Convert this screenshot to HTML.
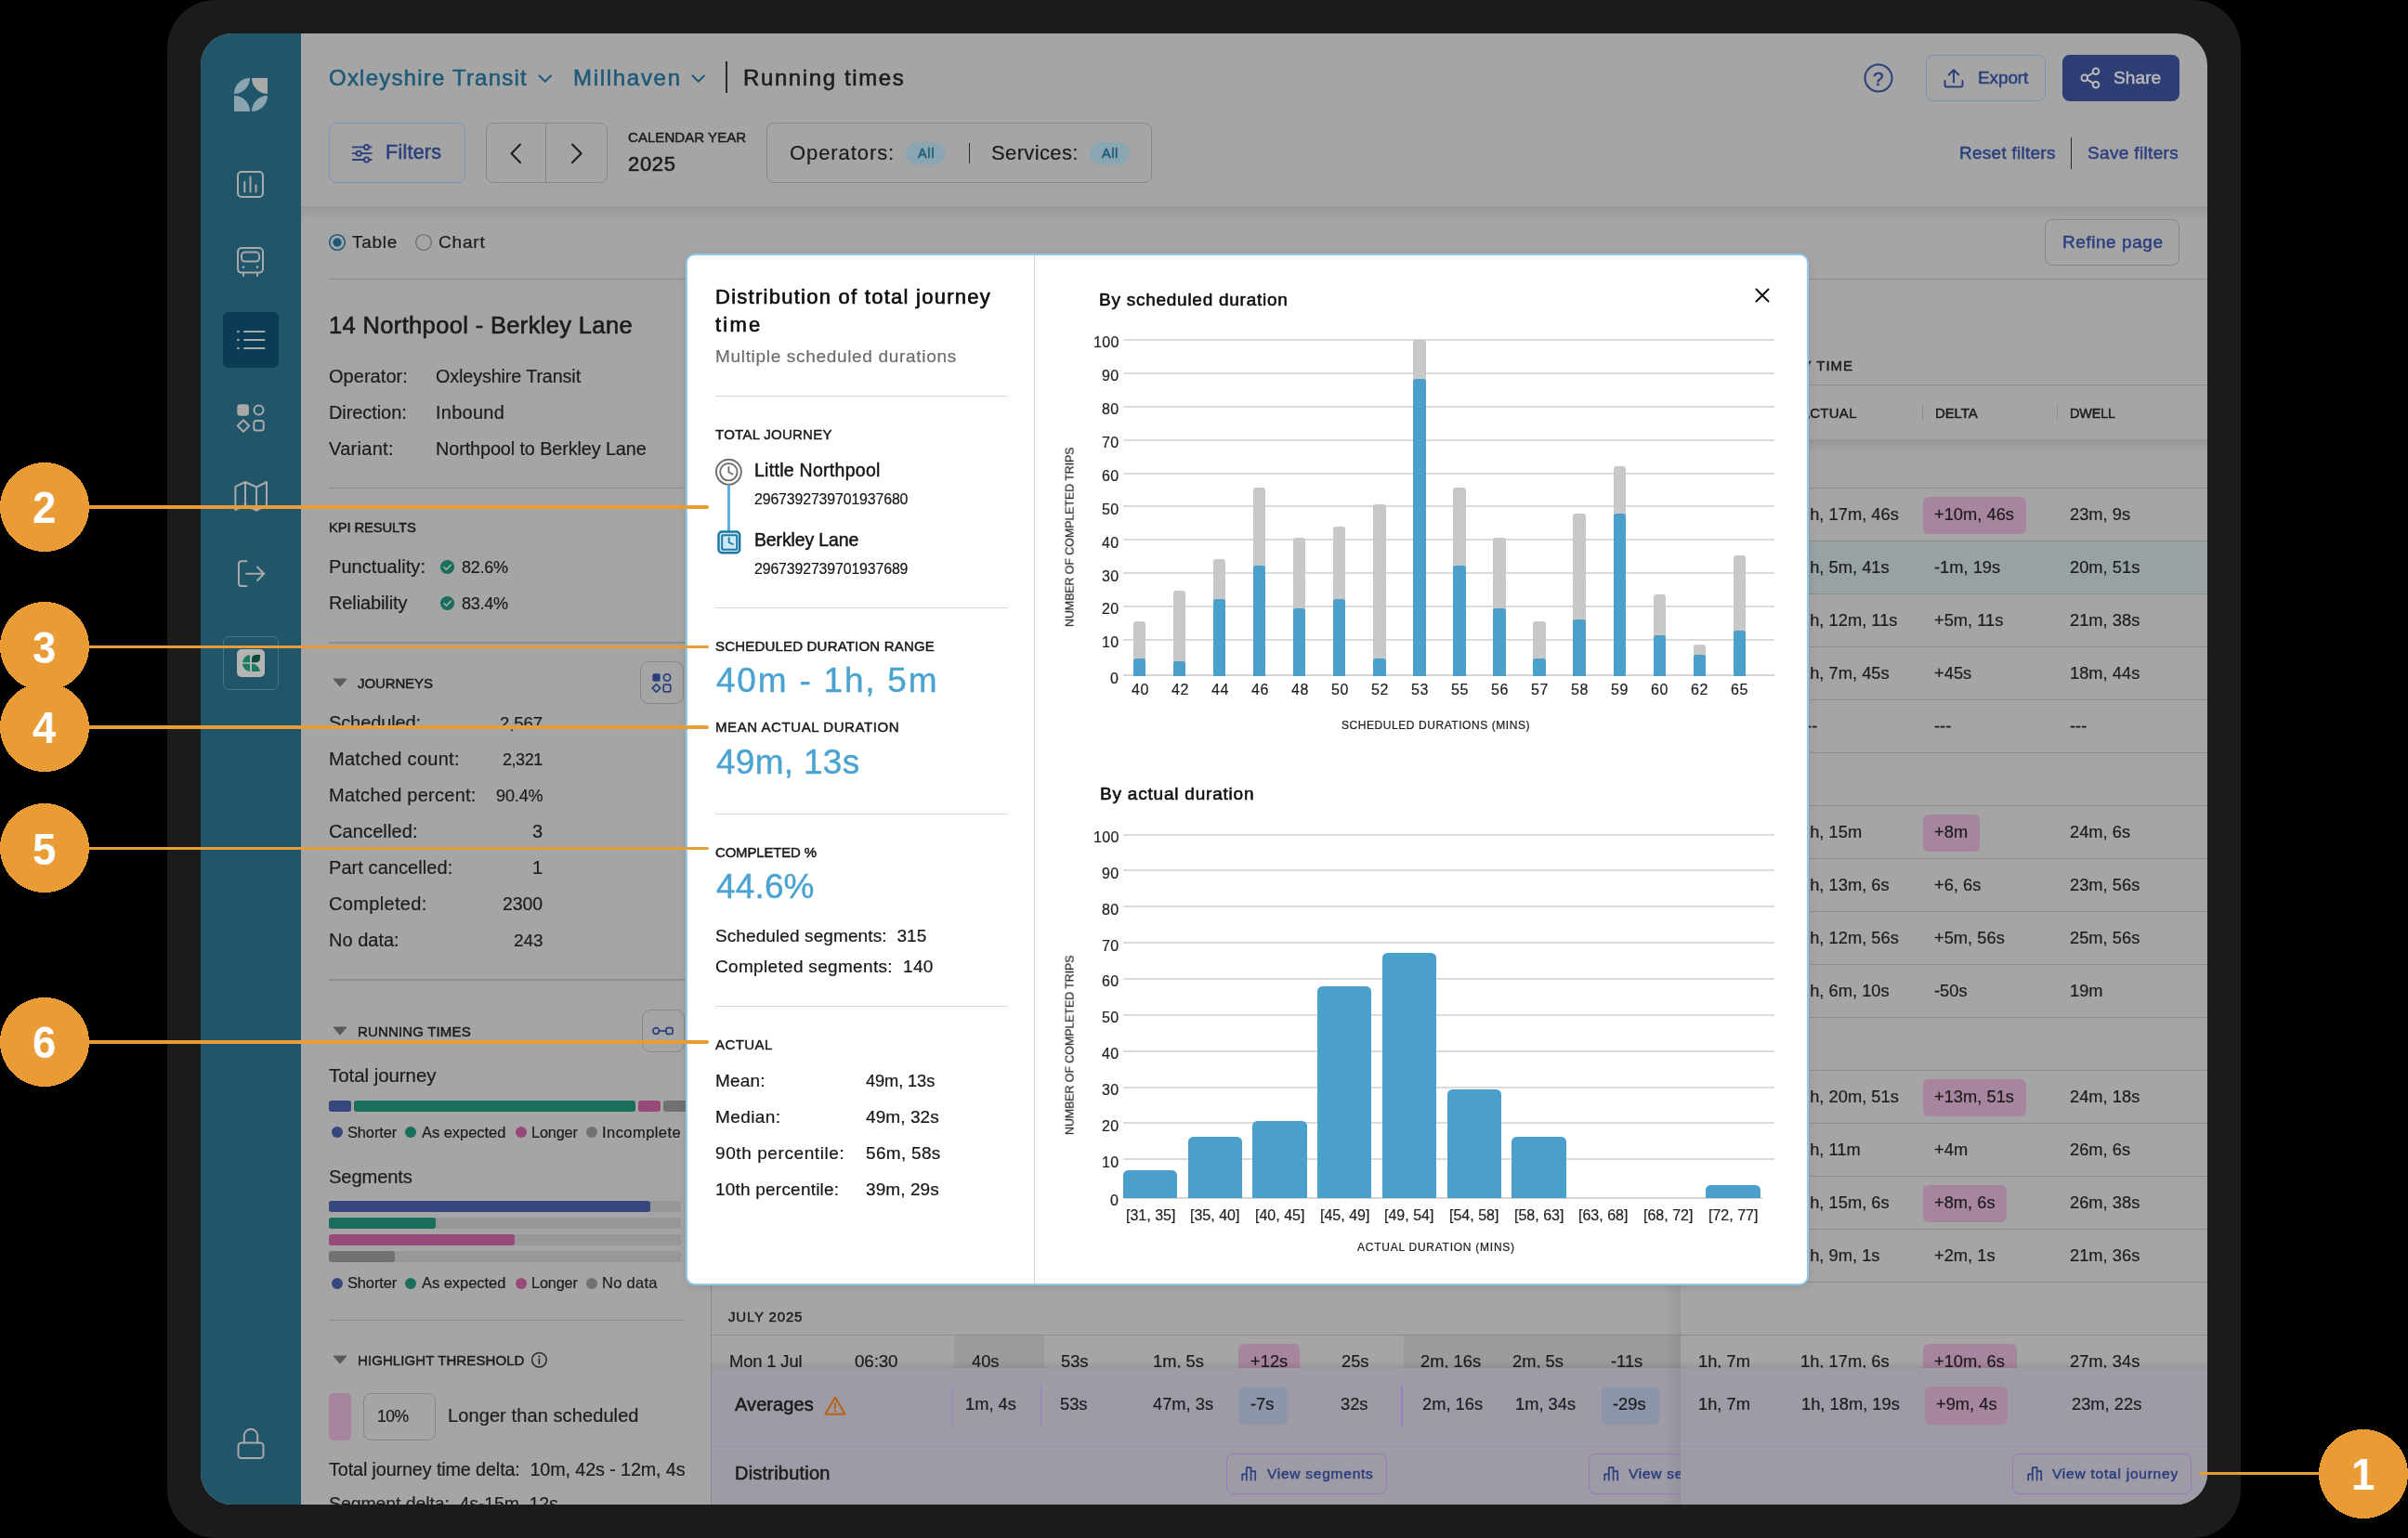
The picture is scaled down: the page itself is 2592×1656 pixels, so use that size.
<!DOCTYPE html>
<html lang="en"><head><meta charset="utf-8"><title>Running times - Distribution of total journey time</title>
<style>
html,body{margin:0;padding:0;background:#000;}
html{width:2592px;height:1656px;overflow:hidden;}
body{width:2592px;height:1656px;position:relative;overflow:hidden;font-family:"Liberation Sans",sans-serif;}
.a{position:absolute;display:block;}
.t{position:absolute;white-space:pre;line-height:1;font-family:"Liberation Sans",sans-serif;}
#frame{position:absolute;left:180px;top:0px;width:2232px;height:1656px;border-radius:52px;background:#1b1b1b;}
#screen{position:absolute;left:216px;top:36px;width:2160px;height:1584px;border-radius:34px;overflow:hidden;background:#a5a5a5;}
#in{position:absolute;left:-216px;top:-36px;width:2592px;height:1656px;}
.t{will-change:transform;}
</style></head><body>
<div id="frame"></div>
<div id="screen"><div id="in">
<div class="a" style="left:216.0px;top:36.0px;width:108.0px;height:1584.0px;background:#21556a;"></div>
<svg class="a" style="left:252.0px;top:84.0px;" width="36" height="36" viewBox="0 0 36 36" fill="none"><path d="M17 0A17 17 0 0 0 0 17A17 17 0 0 0 17 0Z" fill="#8ba5b0"/><path d="M19 0H36V17A17 17 0 0 1 19 0Z" fill="#a9a9a9"/><path d="M0 19V36H17A17 17 0 0 0 0 19Z" fill="#8ba5b0"/><path d="M19 36A17 17 0 0 1 36 19A17 17 0 0 1 19 36Z" fill="#8ba5b0"/></svg>
<svg class="a" style="left:253.7px;top:182.5px;" width="31" height="31" viewBox="0 0 31 31" fill="none"><rect x="2" y="2" width="27" height="27" rx="4" stroke="#a9a9a9" stroke-width="2" stroke-linecap="round" stroke-linejoin="round"/><path d="M9.3 23.5V13.1M15.5 23.5V7.5M21.5 23.5V16.2" stroke="#a9a9a9" stroke-width="2" stroke-linecap="round" stroke-linejoin="round"/></svg>
<svg class="a" style="left:253.7px;top:265.4px;" width="31" height="35" viewBox="0 0 31 35" fill="none"><rect x="2" y="2" width="27" height="26.6" rx="4" stroke="#a9a9a9" stroke-width="2" stroke-linecap="round" stroke-linejoin="round"/><rect x="6" y="6.6" width="19" height="10" rx="3.5" stroke="#a9a9a9" stroke-width="2" stroke-linecap="round" stroke-linejoin="round"/><path d="M8 29v3M23 29v3" stroke="#a9a9a9" stroke-width="2" stroke-linecap="round" stroke-linejoin="round"/><circle cx="8" cy="22.6" r="1.3" fill="#a9a9a9"/><circle cx="23" cy="22.6" r="1.3" fill="#a9a9a9"/></svg>
<div class="a" style="left:240.0px;top:336.0px;width:60.0px;height:60.0px;background:#0b3c56;border-radius:6px;"></div>
<svg class="a" style="left:250.0px;top:350.0px;" width="40" height="32" viewBox="0 0 40 32" fill="none"><path d="M13 7H34.5M13 16H34.5M13 25H34.5" stroke="#a9a9a9" stroke-width="2" stroke-linecap="round" stroke-linejoin="round"/><circle cx="6.4" cy="7" r="1.3" fill="#a9a9a9"/><circle cx="6.4" cy="16" r="1.3" fill="#a9a9a9"/><circle cx="6.4" cy="25" r="1.3" fill="#a9a9a9"/></svg>
<svg class="a" style="left:254.0px;top:434.0px;" width="32" height="32" viewBox="0 0 32 32" fill="none"><rect x="1.3" y="1.3" width="12.6" height="12.4" rx="3.2" fill="#a9a9a9"/><circle cx="24.5" cy="7.5" r="5" stroke="#a9a9a9" stroke-width="2" stroke-linecap="round" stroke-linejoin="round"/><path d="M8 18.2L14.2 24.5L8 30.8L1.8 24.5Z" stroke="#a9a9a9" stroke-width="2" stroke-linecap="round" stroke-linejoin="round"/><rect x="19.3" y="19" width="10.4" height="10.4" rx="2.5" stroke="#a9a9a9" stroke-width="2" stroke-linecap="round" stroke-linejoin="round"/></svg>
<svg class="a" style="left:250.0px;top:515.0px;" width="40" height="38" viewBox="0 0 40 38" fill="none"><path d="M3.4 9L14 4L26 9.5L37 4V29L26 34.5L14 29L3.4 34Z M14 4V29 M26 9.5V34.5" stroke="#a9a9a9" stroke-width="2" stroke-linecap="round" stroke-linejoin="round"/></svg>
<svg class="a" style="left:254.0px;top:601.0px;" width="34" height="34" viewBox="0 0 34 34" fill="none"><path d="M11.5 3.3H6a3 3 0 0 0-3 3V27a3 3 0 0 0 3 3H11.5" stroke="#a9a9a9" stroke-width="2" stroke-linecap="round" stroke-linejoin="round"/><path d="M11 16.7H30M23 9.5L30.2 16.7L23 24" stroke="#a9a9a9" stroke-width="2" stroke-linecap="round" stroke-linejoin="round"/></svg>
<div class="a" style="left:240.3px;top:684.7px;width:59.4px;height:58.4px;border:1.5px solid #43778d;box-sizing:border-box;border-radius:7px;"></div>
<div class="a" style="left:255.0px;top:699.0px;width:30.0px;height:30.0px;background:#b4b4b4;border-radius:5px;"></div>
<svg class="a" style="left:255.0px;top:699.0px;" width="30" height="30" viewBox="0 0 30 30" fill="none"><path d="M14 6A9 9 0 0 0 6 14.2H14Z" fill="#1b7a63"/><path d="M6 15.8A9 9 0 0 0 14 24V15.8Z" fill="#1b7a63"/><path d="M16 15.8V24H25A9 9 0 0 0 16 15.8Z" fill="#1b7a63"/><path d="M16 14.2V10.5A4.5 4.5 0 0 1 20.5 6H25V9.7A4.5 4.5 0 0 1 20.5 14.2Z" fill="#0f4a3c"/></svg>
<svg class="a" style="left:253.0px;top:1536.0px;" width="34" height="37" viewBox="0 0 34 37" fill="none"><rect x="3.5" y="17.5" width="27" height="16.5" rx="3.5" stroke="#a9a9a9" stroke-width="2" stroke-linecap="round" stroke-linejoin="round"/><path d="M9.8 17.5V10a7.2 7.2 0 0 1 14.4 0V17.5" stroke="#a9a9a9" stroke-width="2" stroke-linecap="round" stroke-linejoin="round"/></svg>
<div class="a" style="left:324.0px;top:222.0px;width:2052.0px;height:16.0px;background:linear-gradient(to bottom,rgba(0,0,0,0.075),rgba(0,0,0,0));"></div>
<div class="t" style="left:354.3px;top:72.0px;font-size:24px;color:#1d5a78;letter-spacing:1.21px;-webkit-text-stroke:0.56px #1d5a78;">Oxleyshire Transit</div>
<svg class="a" style="left:578.0px;top:78.0px;" width="18" height="13" viewBox="0 0 18 13" fill="none"><path d="M2.5 3.5L8.8 9.8L15 3.5" stroke="#1d5a78" stroke-width="2" stroke-linecap="round" stroke-linejoin="round"/></svg>
<div class="t" style="left:617.0px;top:72.0px;font-size:24px;color:#1d5a78;letter-spacing:1.70px;-webkit-text-stroke:0.56px #1d5a78;">Millhaven</div>
<svg class="a" style="left:743.0px;top:78.0px;" width="18" height="13" viewBox="0 0 18 13" fill="none"><path d="M2.5 3.5L8.8 9.8L15 3.5" stroke="#1d5a78" stroke-width="2" stroke-linecap="round" stroke-linejoin="round"/></svg>
<div class="a" style="left:781.4px;top:66.4px;width:1.6px;height:33.6px;background:#2a2a2a;"></div>
<div class="t" style="left:800.0px;top:72.0px;font-size:24px;color:#1c1c1c;letter-spacing:1.61px;-webkit-text-stroke:0.56px #1c1c1c;">Running times</div>
<svg class="a" style="left:2005.0px;top:67.0px;" width="34" height="34" viewBox="0 0 34 34" fill="none"><circle cx="17" cy="17" r="14.5" stroke="#2b3f7e" stroke-width="2"/></svg>
<div class="t" style="left:2016.2px;top:74.0px;font-size:21px;color:#2b3f7e;-webkit-text-stroke:0.48px #2b3f7e;">?</div>
<div class="a" style="left:2073.0px;top:58.7px;width:129.0px;height:50.5px;border:1.5px solid #7d90bd;box-sizing:border-box;border-radius:8px;"></div>
<svg class="a" style="left:2090.0px;top:72.0px;" width="26" height="24" viewBox="0 0 26 24" fill="none"><path d="M3.5 15V19.5a2 2 0 0 0 2 2H20.5a2 2 0 0 0 2-2V15" stroke="#2b3f7e" stroke-width="2" stroke-linecap="round" stroke-linejoin="round"/><path d="M13 16.5V3.5M7.7 8.5L13 3.2L18.3 8.5" stroke="#2b3f7e" stroke-width="2" stroke-linecap="round" stroke-linejoin="round"/></svg>
<div class="t" style="left:2128.6px;top:74.0px;font-size:19.03px;color:#2b3f7e;letter-spacing:-0.12px;-webkit-text-stroke:0.48px #2b3f7e;">Export</div>
<div class="a" style="left:2220.1px;top:58.7px;width:125.8px;height:50.5px;background:#2c3e74;border-radius:8px;"></div>
<svg class="a" style="left:2238.0px;top:70.0px;" width="26" height="28" viewBox="0 0 26 28" fill="none"><circle cx="18" cy="6.8" r="3.3" stroke="#b9b9b9" stroke-width="2" stroke-linecap="round"/><circle cx="5.8" cy="13.9" r="3.3" stroke="#b9b9b9" stroke-width="2" stroke-linecap="round"/><circle cx="18" cy="21.3" r="3.3" stroke="#b9b9b9" stroke-width="2" stroke-linecap="round"/><path d="M8.7 12.2L15.1 8.5M8.7 15.6L15.1 19.6" stroke="#b9b9b9" stroke-width="2" stroke-linecap="round"/></svg>
<div class="t" style="left:2275.4px;top:74.0px;font-size:19.2px;color:#b9b9b9;letter-spacing:0.02px;-webkit-text-stroke:0.48px #b9b9b9;">Share</div>
<div class="a" style="left:354.3px;top:132.2px;width:146.3px;height:65.3px;border:1.5px solid #7f93c0;box-sizing:border-box;border-radius:8px;"></div>
<svg class="a" style="left:378.0px;top:153.0px;" width="24" height="24" viewBox="0 0 24 24" fill="none"><path d="M1.7 5.4H13.8M19.2 5.4H21.8M1.7 12.2H5.5M10.8 12.2H21.8M1.7 19H13.8M19.2 19H21.8" stroke="#2b3f7e" stroke-width="1.8" stroke-linecap="round"/><circle cx="16.5" cy="5.4" r="2.6" stroke="#2b3f7e" stroke-width="1.8" stroke-linecap="round"/><circle cx="8.2" cy="12.2" r="2.6" stroke="#2b3f7e" stroke-width="1.8" stroke-linecap="round"/><circle cx="16.5" cy="19" r="2.6" stroke="#2b3f7e" stroke-width="1.8" stroke-linecap="round"/></svg>
<div class="t" style="left:415.4px;top:154.0px;font-size:21.5px;color:#2b3f7e;letter-spacing:0.25px;-webkit-text-stroke:0.56px #2b3f7e;">Filters</div>
<div class="a" style="left:522.6px;top:132.2px;width:131.0px;height:65.3px;border:1.5px solid #878787;box-sizing:border-box;border-radius:8px;"></div>
<div class="a" style="left:586.9px;top:133.0px;width:1.5px;height:64.0px;background:#878787;"></div>
<svg class="a" style="left:545.0px;top:152.0px;" width="20" height="27" viewBox="0 0 20 27" fill="none"><path d="M15 3.5L5.5 13.2L15 23" stroke="#1c1c1c" stroke-width="2" stroke-linecap="round" stroke-linejoin="round"/></svg>
<svg class="a" style="left:611.0px;top:152.0px;" width="20" height="27" viewBox="0 0 20 27" fill="none"><path d="M5 3.5L14.7 13.2L5 23" stroke="#1c1c1c" stroke-width="2" stroke-linecap="round" stroke-linejoin="round"/></svg>
<div class="t" style="left:675.5px;top:140.0px;font-size:15px;color:#1c1c1c;letter-spacing:0.06px;-webkit-text-stroke:0.48px #1c1c1c;">CALENDAR YEAR</div>
<div class="t" style="left:675.5px;top:166.0px;font-size:22px;color:#1c1c1c;letter-spacing:0.69px;-webkit-text-stroke:0.56px #1c1c1c;">2025</div>
<div class="a" style="left:825.2px;top:132.2px;width:414.8px;height:65.3px;border:1.5px solid #878787;box-sizing:border-box;border-radius:8px;"></div>
<div class="t" style="left:849.8px;top:154.0px;font-size:22px;color:#1c1c1c;letter-spacing:0.92px;-webkit-text-stroke:0.2px #1c1c1c;">Operators:</div>
<div class="a" style="left:974.8px;top:153.0px;width:43.4px;height:23.8px;background:#8ba6b3;border-radius:12px;"></div>
<div class="t" style="left:988.2px;top:158.0px;font-size:14.5px;color:#1d5a78;letter-spacing:0.69px;-webkit-text-stroke:0.48px #1d5a78;">All</div>
<div class="a" style="left:1042.5px;top:154.0px;width:1.5px;height:21.7px;background:#2a2a2a;"></div>
<div class="t" style="left:1067.3px;top:154.0px;font-size:22px;color:#1c1c1c;letter-spacing:0.37px;-webkit-text-stroke:0.2px #1c1c1c;">Services:</div>
<div class="a" style="left:1173.0px;top:153.0px;width:43.4px;height:23.8px;background:#8ba6b3;border-radius:12px;"></div>
<div class="t" style="left:1186.4px;top:158.0px;font-size:14.5px;color:#1d5a78;letter-spacing:0.54px;-webkit-text-stroke:0.48px #1d5a78;">All</div>
<div class="t" style="left:2108.6px;top:155.0px;font-size:19px;color:#2b3f7e;letter-spacing:0.26px;-webkit-text-stroke:0.48px #2b3f7e;">Reset filters</div>
<div class="a" style="left:2228.8px;top:148.0px;width:1.5px;height:33.5px;background:#2a2a2a;"></div>
<div class="t" style="left:2247.0px;top:155.0px;font-size:19px;color:#2b3f7e;letter-spacing:0.34px;-webkit-text-stroke:0.48px #2b3f7e;">Save filters</div>
<svg class="a" style="left:352.0px;top:250.0px;" width="22" height="22" viewBox="0 0 22 22" fill="none"><circle cx="11" cy="11" r="8.3" stroke="#1d5a78" stroke-width="1.6"/><circle cx="11" cy="11" r="4.7" fill="#1d5a78"/></svg>
<div class="t" style="left:378.7px;top:251.0px;font-size:19px;color:#1c1c1c;letter-spacing:0.74px;-webkit-text-stroke:0.2px #1c1c1c;">Table</div>
<svg class="a" style="left:445.0px;top:250.0px;" width="22" height="22" viewBox="0 0 22 22" fill="none"><circle cx="11" cy="11" r="8.4" stroke="#707070" stroke-width="1.4"/></svg>
<div class="t" style="left:471.8px;top:251.0px;font-size:19px;color:#1c1c1c;letter-spacing:0.81px;-webkit-text-stroke:0.2px #1c1c1c;">Chart</div>
<div class="a" style="left:2201.0px;top:236.0px;width:145.0px;height:49.6px;border:1.5px solid #878787;box-sizing:border-box;border-radius:8px;"></div>
<div class="t" style="left:2219.5px;top:251.0px;font-size:19px;color:#2b3f7e;letter-spacing:0.55px;-webkit-text-stroke:0.48px #2b3f7e;">Refine page</div>
<div class="a" style="left:354.0px;top:299.7px;width:2022.0px;height:1.6px;background:#8a8a8a;"></div>
<div class="t" style="left:354.0px;top:338.0px;font-size:25.5px;color:#1c1c1c;letter-spacing:0.35px;-webkit-text-stroke:0.64px #1c1c1c;">14 Northpool - Berkley Lane</div>
<div class="t" style="left:354.0px;top:395.0px;font-size:20px;color:#1c1c1c;letter-spacing:0.04px;-webkit-text-stroke:0.2px #1c1c1c;">Operator:</div>
<div class="t" style="left:468.7px;top:396.0px;font-size:19.78px;color:#1c1c1c;letter-spacing:-0.12px;-webkit-text-stroke:0.2px #1c1c1c;">Oxleyshire Transit</div>
<div class="t" style="left:354.0px;top:434.0px;font-size:20px;color:#1c1c1c;letter-spacing:-0.08px;-webkit-text-stroke:0.2px #1c1c1c;">Direction:</div>
<div class="t" style="left:468.7px;top:434.0px;font-size:20px;color:#1c1c1c;letter-spacing:0.25px;-webkit-text-stroke:0.2px #1c1c1c;">Inbound</div>
<div class="t" style="left:354.0px;top:473.0px;font-size:20px;color:#1c1c1c;letter-spacing:0.29px;-webkit-text-stroke:0.2px #1c1c1c;">Variant:</div>
<div class="t" style="left:468.7px;top:474.0px;font-size:19.86px;color:#1c1c1c;letter-spacing:-0.12px;-webkit-text-stroke:0.2px #1c1c1c;">Northpool to Berkley Lane</div>
<div class="a" style="left:354.0px;top:524.8px;width:382.6px;height:1.5px;background:#8d8d8d;"></div>
<div class="t" style="left:354.0px;top:561.0px;font-size:14.79px;color:#1c1c1c;letter-spacing:-0.12px;-webkit-text-stroke:0.48px #1c1c1c;">KPI RESULTS</div>
<div class="t" style="left:354.0px;top:600.0px;font-size:20px;color:#1c1c1c;letter-spacing:0.05px;-webkit-text-stroke:0.2px #1c1c1c;">Punctuality:</div>
<svg class="a" style="left:473.0px;top:602.0px;" width="17" height="17" viewBox="0 0 17 17" fill="none"><circle cx="8.5" cy="8.5" r="7.6" fill="#1a6e5c"/><path d="M5 8.8L7.6 11.3L12.2 6.3" stroke="#b0b0b0" stroke-width="1.5" stroke-linecap="round" stroke-linejoin="round"/></svg>
<div class="t" style="left:496.8px;top:602.0px;font-size:18.0px;color:#1c1c1c;letter-spacing:-0.28px;-webkit-text-stroke:0.2px #1c1c1c;">82.6%</div>
<div class="t" style="left:354.0px;top:639.0px;font-size:20px;color:#1c1c1c;letter-spacing:-0.11px;-webkit-text-stroke:0.2px #1c1c1c;">Reliability</div>
<svg class="a" style="left:473.0px;top:641.0px;" width="17" height="17" viewBox="0 0 17 17" fill="none"><circle cx="8.5" cy="8.5" r="7.6" fill="#1a6e5c"/><path d="M5 8.8L7.6 11.3L12.2 6.3" stroke="#b0b0b0" stroke-width="1.5" stroke-linecap="round" stroke-linejoin="round"/></svg>
<div class="t" style="left:496.8px;top:641.0px;font-size:18.0px;color:#1c1c1c;letter-spacing:-0.28px;-webkit-text-stroke:0.2px #1c1c1c;">83.4%</div>
<div class="a" style="left:354.0px;top:691.2px;width:382.6px;height:1.5px;background:#8d8d8d;"></div>
<svg class="a" style="left:358.0px;top:730.0px;" width="17" height="11" viewBox="0 0 17 11" fill="none"><path d="M1 1H15L8 9.2Z" fill="#5a5a5a" stroke="#5a5a5a" stroke-width="1" stroke-linejoin="round"/></svg>
<div class="t" style="left:384.7px;top:728.0px;font-size:15px;color:#1c1c1c;letter-spacing:-0.11px;-webkit-text-stroke:0.48px #1c1c1c;">JOURNEYS</div>
<div class="a" style="left:689.0px;top:711.7px;width:46.8px;height:46.3px;border:1.5px solid #878787;box-sizing:border-box;border-radius:9px;"></div>
<svg class="a" style="left:701.0px;top:723.5px;" width="23" height="23" viewBox="0 0 23 23" fill="none"><rect x="1.3" y="1.3" width="8.4" height="8.4" rx="2" fill="#2b3f7e"/><circle cx="17" cy="5.5" r="3.6" stroke="#2b3f7e" stroke-width="1.7" stroke-linejoin="round"/><path d="M5.5 12.6L9.8 16.9L5.5 21.2L1.2 16.9Z" stroke="#2b3f7e" stroke-width="1.7" stroke-linejoin="round"/><rect x="13.2" y="13.2" width="7.6" height="7.6" rx="1.6" stroke="#2b3f7e" stroke-width="1.7" stroke-linejoin="round"/></svg>
<div class="t" style="left:354.0px;top:768.0px;font-size:20px;color:#1c1c1c;letter-spacing:-0.11px;-webkit-text-stroke:0.2px #1c1c1c;">Scheduled:</div>
<div class="t" style="left:538.4px;top:770.0px;font-size:18.57px;color:#1c1c1c;letter-spacing:-0.12px;-webkit-text-stroke:0.2px #1c1c1c;">2,567</div>
<div class="t" style="left:354.0px;top:807.0px;font-size:20px;color:#1c1c1c;letter-spacing:0.29px;-webkit-text-stroke:0.2px #1c1c1c;">Matched count:</div>
<div class="t" style="left:541.2px;top:809.0px;font-size:18.0px;color:#1c1c1c;letter-spacing:-0.45px;-webkit-text-stroke:0.2px #1c1c1c;">2,321</div>
<div class="t" style="left:354.0px;top:846.0px;font-size:20px;color:#1c1c1c;letter-spacing:0.26px;-webkit-text-stroke:0.2px #1c1c1c;">Matched percent:</div>
<div class="t" style="left:533.9px;top:848.0px;font-size:18.0px;color:#1c1c1c;letter-spacing:-0.13px;-webkit-text-stroke:0.2px #1c1c1c;">90.4%</div>
<div class="t" style="left:354.0px;top:885.0px;font-size:20px;color:#1c1c1c;letter-spacing:0.11px;-webkit-text-stroke:0.2px #1c1c1c;">Cancelled:</div>
<div class="t" style="left:573.3px;top:885.0px;font-size:20px;color:#1c1c1c;-webkit-text-stroke:0.2px #1c1c1c;">3</div>
<div class="t" style="left:354.0px;top:924.0px;font-size:20px;color:#1c1c1c;letter-spacing:0.07px;-webkit-text-stroke:0.2px #1c1c1c;">Part cancelled:</div>
<div class="t" style="left:573.3px;top:924.0px;font-size:20px;color:#1c1c1c;-webkit-text-stroke:0.2px #1c1c1c;">1</div>
<div class="t" style="left:354.0px;top:963.0px;font-size:20px;color:#1c1c1c;letter-spacing:0.33px;-webkit-text-stroke:0.2px #1c1c1c;">Completed:</div>
<div class="t" style="left:541.4px;top:964.0px;font-size:19.49px;color:#1c1c1c;letter-spacing:-0.12px;-webkit-text-stroke:0.2px #1c1c1c;">2300</div>
<div class="t" style="left:354.0px;top:1002.0px;font-size:20px;color:#1c1c1c;letter-spacing:0.01px;-webkit-text-stroke:0.2px #1c1c1c;">No data:</div>
<div class="t" style="left:552.9px;top:1003.0px;font-size:19.02px;color:#1c1c1c;letter-spacing:-0.12px;-webkit-text-stroke:0.2px #1c1c1c;">243</div>
<div class="a" style="left:354.0px;top:1054.2px;width:382.6px;height:1.5px;background:#8d8d8d;"></div>
<svg class="a" style="left:358.0px;top:1105.0px;" width="17" height="11" viewBox="0 0 17 11" fill="none"><path d="M1 1H15L8 9.2Z" fill="#5a5a5a" stroke="#5a5a5a" stroke-width="1" stroke-linejoin="round"/></svg>
<div class="t" style="left:384.7px;top:1103.0px;font-size:15px;color:#1c1c1c;letter-spacing:0.16px;-webkit-text-stroke:0.48px #1c1c1c;">RUNNING TIMES</div>
<div class="a" style="left:690.5px;top:1086.5px;width:46.5px;height:46.8px;border:1.5px solid #878787;box-sizing:border-box;border-radius:9px;"></div>
<svg class="a" style="left:701.0px;top:1100.0px;" width="26" height="20" viewBox="0 0 26 20" fill="none"><circle cx="5.2" cy="10" r="3.3" stroke="#2b3f7e" stroke-width="1.7" stroke-linejoin="round"/><rect x="16.2" y="6.6" width="6.8" height="6.8" rx="1.5" stroke="#2b3f7e" stroke-width="1.7" stroke-linejoin="round"/><path d="M8.5 10H16.2" stroke="#2b3f7e" stroke-width="1.7" stroke-linejoin="round"/></svg>
<div class="t" style="left:354.0px;top:1148.0px;font-size:20.5px;color:#1c1c1c;letter-spacing:-0.06px;-webkit-text-stroke:0.2px #1c1c1c;">Total journey</div>
<div class="a" style="left:354.0px;top:1185.4px;width:24.0px;height:11.5px;background:#35477d;border-radius:3px;"></div>
<div class="a" style="left:381.0px;top:1185.4px;width:302.8px;height:11.5px;background:#1a6e5c;border-radius:3px;"></div>
<div class="a" style="left:687.0px;top:1185.4px;width:23.8px;height:11.5px;background:#97497a;border-radius:3px;"></div>
<div class="a" style="left:714.0px;top:1185.4px;width:26.0px;height:11.5px;background:#717171;border-radius:3px;"></div>
<div class="a" style="left:356.8px;top:1213.4px;width:12.0px;height:12.0px;background:#35477d;border-radius:6px;"></div>
<div class="t" style="left:373.8px;top:1211.0px;font-size:16.44px;color:#1c1c1c;letter-spacing:-0.12px;-webkit-text-stroke:0.2px #1c1c1c;">Shorter</div>
<div class="a" style="left:436.0px;top:1213.4px;width:12.0px;height:12.0px;background:#1a6e5c;border-radius:6px;"></div>
<div class="t" style="left:453.6px;top:1211.0px;font-size:16.5px;color:#1c1c1c;letter-spacing:-0.04px;-webkit-text-stroke:0.2px #1c1c1c;">As expected</div>
<div class="a" style="left:554.7px;top:1213.4px;width:12.0px;height:12.0px;background:#97497a;border-radius:6px;"></div>
<div class="t" style="left:571.7px;top:1211.0px;font-size:16.22px;color:#1c1c1c;letter-spacing:-0.12px;-webkit-text-stroke:0.2px #1c1c1c;">Longer</div>
<div class="a" style="left:631.0px;top:1213.4px;width:12.0px;height:12.0px;background:#717171;border-radius:6px;"></div>
<div class="t" style="left:648.0px;top:1211.0px;font-size:16.5px;color:#1c1c1c;letter-spacing:0.44px;-webkit-text-stroke:0.2px #1c1c1c;">Incomplete</div>
<div class="t" style="left:354.0px;top:1257.0px;font-size:20.17px;color:#1c1c1c;letter-spacing:-0.12px;-webkit-text-stroke:0.2px #1c1c1c;">Segments</div>
<div class="a" style="left:354.0px;top:1293.3px;width:379.2px;height:11.5px;background:#979797;border-radius:3px;"></div>
<div class="a" style="left:354.0px;top:1293.3px;width:346.0px;height:11.5px;background:#35477d;border-radius:3px;"></div>
<div class="a" style="left:354.0px;top:1311.2px;width:379.2px;height:11.5px;background:#979797;border-radius:3px;"></div>
<div class="a" style="left:354.0px;top:1311.2px;width:115.0px;height:11.5px;background:#1a6e5c;border-radius:3px;"></div>
<div class="a" style="left:354.0px;top:1329.2px;width:379.2px;height:11.5px;background:#979797;border-radius:3px;"></div>
<div class="a" style="left:354.0px;top:1329.2px;width:199.5px;height:11.5px;background:#97497a;border-radius:3px;"></div>
<div class="a" style="left:354.0px;top:1347.1px;width:379.2px;height:11.5px;background:#979797;border-radius:3px;"></div>
<div class="a" style="left:354.0px;top:1347.1px;width:70.5px;height:11.5px;background:#717171;border-radius:3px;"></div>
<div class="a" style="left:356.8px;top:1375.5px;width:12.0px;height:12.0px;background:#35477d;border-radius:6px;"></div>
<div class="t" style="left:373.8px;top:1373.0px;font-size:16.44px;color:#1c1c1c;letter-spacing:-0.12px;-webkit-text-stroke:0.2px #1c1c1c;">Shorter</div>
<div class="a" style="left:436.0px;top:1375.5px;width:12.0px;height:12.0px;background:#1a6e5c;border-radius:6px;"></div>
<div class="t" style="left:453.6px;top:1373.0px;font-size:16.5px;color:#1c1c1c;letter-spacing:-0.04px;-webkit-text-stroke:0.2px #1c1c1c;">As expected</div>
<div class="a" style="left:554.7px;top:1375.5px;width:12.0px;height:12.0px;background:#97497a;border-radius:6px;"></div>
<div class="t" style="left:571.7px;top:1373.0px;font-size:16.22px;color:#1c1c1c;letter-spacing:-0.12px;-webkit-text-stroke:0.2px #1c1c1c;">Longer</div>
<div class="a" style="left:631.0px;top:1375.5px;width:12.0px;height:12.0px;background:#717171;border-radius:6px;"></div>
<div class="t" style="left:648.0px;top:1373.0px;font-size:16.5px;color:#1c1c1c;letter-spacing:0.27px;-webkit-text-stroke:0.2px #1c1c1c;">No data</div>
<div class="a" style="left:354.0px;top:1420.5px;width:382.6px;height:1.5px;background:#8d8d8d;"></div>
<svg class="a" style="left:358.0px;top:1459.0px;" width="17" height="11" viewBox="0 0 17 11" fill="none"><path d="M1 1H15L8 9.2Z" fill="#5a5a5a" stroke="#5a5a5a" stroke-width="1" stroke-linejoin="round"/></svg>
<div class="t" style="left:384.7px;top:1457.0px;font-size:15px;color:#1c1c1c;letter-spacing:0.09px;-webkit-text-stroke:0.48px #1c1c1c;">HIGHLIGHT THRESHOLD</div>
<svg class="a" style="left:571.0px;top:1455.0px;" width="19" height="19" viewBox="0 0 19 19" fill="none"><circle cx="9.4" cy="9.3" r="7.8" stroke="#262626" stroke-width="1.5"/><path d="M9.4 8.3V13.3" stroke="#262626" stroke-width="1.6" stroke-linecap="round"/><circle cx="9.4" cy="5.4" r="1" fill="#262626"/></svg>
<div class="a" style="left:354.0px;top:1500.0px;width:24.0px;height:50.7px;background:#a8859e;border-radius:5px;"></div>
<div class="a" style="left:390.5px;top:1500.0px;width:78.5px;height:50.7px;border:1.5px solid #878787;box-sizing:border-box;border-radius:8px;"></div>
<div class="t" style="left:405.5px;top:1517.0px;font-size:17.55px;color:#1c1c1c;letter-spacing:-0.45px;-webkit-text-stroke:0.2px #1c1c1c;">10%</div>
<div class="t" style="left:482.0px;top:1514.0px;font-size:20px;color:#1c1c1c;letter-spacing:0.10px;-webkit-text-stroke:0.2px #1c1c1c;">Longer than scheduled</div>
<div class="t" style="left:354.0px;top:1573.0px;font-size:19.78px;color:#1c1c1c;letter-spacing:-0.12px;-webkit-text-stroke:0.2px #1c1c1c;">Total journey time delta:  10m, 42s - 12m, 4s</div>
<div class="t" style="left:354.0px;top:1610.0px;font-size:19.56px;color:#1c1c1c;letter-spacing:-0.12px;-webkit-text-stroke:0.2px #1c1c1c;">Segment delta:  4s-15m, 12s</div>
<div class="a" style="left:766.0px;top:582.3px;width:1610.0px;height:57.0px;background:#98a1a4;"></div>
<div class="a" style="left:1027.0px;top:1437.3px;width:96.7px;height:40.0px;background:#9c9c9c;"></div>
<div class="a" style="left:1510.5px;top:1437.3px;width:298.5px;height:40.0px;background:#9c9c9c;"></div>
<div class="a" style="left:764.8px;top:300.0px;width:1.5px;height:1320.0px;background:#8a8a8a;"></div>
<div class="t" style="left:1816.3px;top:386.0px;font-size:15px;color:#1c1c1c;letter-spacing:0.96px;-webkit-text-stroke:0.48px #1c1c1c;">TOTAL JOURNEY TIME</div>
<div class="a" style="left:1809.0px;top:413.8px;width:567.0px;height:1.5px;background:#8d8d8d;"></div>
<div class="t" style="left:1827.8px;top:437.0px;font-size:15px;color:#1c1c1c;letter-spacing:0.44px;-webkit-text-stroke:0.48px #1c1c1c;">SCHEDULED</div>
<div class="t" style="left:1937.5px;top:437.0px;font-size:15px;color:#1c1c1c;letter-spacing:0.26px;-webkit-text-stroke:0.48px #1c1c1c;">ACTUAL</div>
<div class="t" style="left:2082.5px;top:437.0px;font-size:15px;color:#1c1c1c;letter-spacing:-0.11px;-webkit-text-stroke:0.48px #1c1c1c;">DELTA</div>
<div class="t" style="left:2228.0px;top:438.0px;font-size:14.39px;color:#1c1c1c;letter-spacing:-0.12px;-webkit-text-stroke:0.48px #1c1c1c;">DWELL</div>
<div class="a" style="left:1923.2px;top:435.0px;width:1.5px;height:17.8px;background:#8d8d8d;"></div>
<div class="a" style="left:2068.7px;top:435.0px;width:1.5px;height:17.8px;background:#8d8d8d;"></div>
<div class="a" style="left:2213.8px;top:435.0px;width:1.5px;height:17.8px;background:#8d8d8d;"></div>
<div class="a" style="left:766.0px;top:472.5px;width:1610.0px;height:14.0px;background:linear-gradient(to bottom,rgba(0,0,0,0.085),rgba(0,0,0,0));"></div>
<div class="a" style="left:766.0px;top:524.5px;width:1610.0px;height:1.5px;background:#8d8d8d;"></div>
<div class="a" style="left:766.0px;top:581.5px;width:1610.0px;height:1.5px;background:#8d8d8d;"></div>
<div class="a" style="left:766.0px;top:638.5px;width:1610.0px;height:1.5px;background:#8d8d8d;"></div>
<div class="a" style="left:766.0px;top:695.5px;width:1610.0px;height:1.5px;background:#8d8d8d;"></div>
<div class="a" style="left:766.0px;top:752.5px;width:1610.0px;height:1.5px;background:#8d8d8d;"></div>
<div class="a" style="left:766.0px;top:809.5px;width:1610.0px;height:1.5px;background:#8d8d8d;"></div>
<div class="a" style="left:766.0px;top:866.5px;width:1610.0px;height:1.5px;background:#8d8d8d;"></div>
<div class="a" style="left:766.0px;top:923.5px;width:1610.0px;height:1.5px;background:#8d8d8d;"></div>
<div class="a" style="left:766.0px;top:980.5px;width:1610.0px;height:1.5px;background:#8d8d8d;"></div>
<div class="a" style="left:766.0px;top:1037.5px;width:1610.0px;height:1.5px;background:#8d8d8d;"></div>
<div class="a" style="left:766.0px;top:1094.5px;width:1610.0px;height:1.5px;background:#8d8d8d;"></div>
<div class="a" style="left:766.0px;top:1151.5px;width:1610.0px;height:1.5px;background:#8d8d8d;"></div>
<div class="a" style="left:766.0px;top:1208.5px;width:1610.0px;height:1.5px;background:#8d8d8d;"></div>
<div class="a" style="left:766.0px;top:1265.5px;width:1610.0px;height:1.5px;background:#8d8d8d;"></div>
<div class="a" style="left:766.0px;top:1322.5px;width:1610.0px;height:1.5px;background:#8d8d8d;"></div>
<div class="a" style="left:766.0px;top:1379.5px;width:1610.0px;height:1.5px;background:#8d8d8d;"></div>
<div class="a" style="left:766.0px;top:1436.5px;width:1610.0px;height:1.5px;background:#8d8d8d;"></div>
<div class="t" style="left:1827.8px;top:545.0px;font-size:18.3px;color:#1c1c1c;letter-spacing:0.01px;-webkit-text-stroke:0.2px #1c1c1c;">1h, 7m</div>
<div class="t" style="left:1937.8px;top:545.0px;font-size:18.3px;color:#1c1c1c;letter-spacing:0.01px;-webkit-text-stroke:0.2px #1c1c1c;"><span style="visibility:hidden">1</span>h, 17m, 46s</div>
<div class="a" style="left:2070.2px;top:535.0px;width:110.7px;height:40.0px;background:#a8859e;border-radius:6px;"></div>
<div class="t" style="left:2082.4px;top:545.0px;font-size:18.3px;color:#1c1c1c;letter-spacing:0.01px;-webkit-text-stroke:0.2px #1c1c1c;">+10m, 46s</div>
<div class="t" style="left:2228.0px;top:545.0px;font-size:18.3px;color:#1c1c1c;letter-spacing:0.01px;-webkit-text-stroke:0.2px #1c1c1c;">23m, 9s</div>
<div class="t" style="left:1827.8px;top:602.0px;font-size:18.3px;color:#1c1c1c;letter-spacing:0.01px;-webkit-text-stroke:0.2px #1c1c1c;">1h, 7m</div>
<div class="t" style="left:1937.8px;top:602.0px;font-size:18.3px;color:#1c1c1c;letter-spacing:0.01px;-webkit-text-stroke:0.2px #1c1c1c;"><span style="visibility:hidden">1</span>h, 5m, 41s</div>
<div class="t" style="left:2082.4px;top:602.0px;font-size:18.3px;color:#1c1c1c;letter-spacing:0.01px;-webkit-text-stroke:0.2px #1c1c1c;">-1m, 19s</div>
<div class="t" style="left:2228.0px;top:602.0px;font-size:18.3px;color:#1c1c1c;letter-spacing:0.01px;-webkit-text-stroke:0.2px #1c1c1c;">20m, 51s</div>
<div class="t" style="left:1827.8px;top:659.0px;font-size:18.3px;color:#1c1c1c;letter-spacing:0.01px;-webkit-text-stroke:0.2px #1c1c1c;">1h, 7m</div>
<div class="t" style="left:1937.8px;top:659.0px;font-size:18.3px;color:#1c1c1c;letter-spacing:0.01px;-webkit-text-stroke:0.2px #1c1c1c;"><span style="visibility:hidden">1</span>h, 12m, 11s</div>
<div class="t" style="left:2082.4px;top:659.0px;font-size:18.3px;color:#1c1c1c;letter-spacing:0.01px;-webkit-text-stroke:0.2px #1c1c1c;">+5m, 11s</div>
<div class="t" style="left:2228.0px;top:659.0px;font-size:18.3px;color:#1c1c1c;letter-spacing:0.01px;-webkit-text-stroke:0.2px #1c1c1c;">21m, 38s</div>
<div class="t" style="left:1827.8px;top:716.0px;font-size:18.3px;color:#1c1c1c;letter-spacing:0.01px;-webkit-text-stroke:0.2px #1c1c1c;">1h, 7m</div>
<div class="t" style="left:1937.8px;top:716.0px;font-size:18.3px;color:#1c1c1c;letter-spacing:0.01px;-webkit-text-stroke:0.2px #1c1c1c;"><span style="visibility:hidden">1</span>h, 7m, 45s</div>
<div class="t" style="left:2082.4px;top:716.0px;font-size:18.3px;color:#1c1c1c;letter-spacing:0.02px;-webkit-text-stroke:0.2px #1c1c1c;">+45s</div>
<div class="t" style="left:2228.0px;top:716.0px;font-size:18.3px;color:#1c1c1c;letter-spacing:0.01px;-webkit-text-stroke:0.2px #1c1c1c;">18m, 44s</div>
<div class="t" style="left:1827.8px;top:773.0px;font-size:18.3px;color:#1c1c1c;letter-spacing:0.01px;-webkit-text-stroke:0.2px #1c1c1c;">---</div>
<div class="t" style="left:1937.8px;top:773.0px;font-size:18.3px;color:#1c1c1c;letter-spacing:0.01px;-webkit-text-stroke:0.2px #1c1c1c;">---</div>
<div class="t" style="left:2082.4px;top:773.0px;font-size:18.3px;color:#1c1c1c;letter-spacing:0.01px;-webkit-text-stroke:0.2px #1c1c1c;">---</div>
<div class="t" style="left:2228.0px;top:773.0px;font-size:18.3px;color:#1c1c1c;letter-spacing:0.01px;-webkit-text-stroke:0.2px #1c1c1c;">---</div>
<div class="t" style="left:1827.8px;top:887.0px;font-size:18.3px;color:#1c1c1c;letter-spacing:0.01px;-webkit-text-stroke:0.2px #1c1c1c;">1h, 7m</div>
<div class="t" style="left:1937.8px;top:887.0px;font-size:18.3px;color:#1c1c1c;letter-spacing:0.01px;-webkit-text-stroke:0.2px #1c1c1c;"><span style="visibility:hidden">1</span>h, 15m</div>
<div class="a" style="left:2070.2px;top:877.0px;width:60.7px;height:40.0px;background:#a8859e;border-radius:6px;"></div>
<div class="t" style="left:2082.4px;top:887.0px;font-size:18.3px;color:#1c1c1c;letter-spacing:0.02px;-webkit-text-stroke:0.2px #1c1c1c;">+8m</div>
<div class="t" style="left:2228.0px;top:887.0px;font-size:18.3px;color:#1c1c1c;letter-spacing:0.01px;-webkit-text-stroke:0.2px #1c1c1c;">24m, 6s</div>
<div class="t" style="left:1827.8px;top:944.0px;font-size:18.3px;color:#1c1c1c;letter-spacing:0.01px;-webkit-text-stroke:0.2px #1c1c1c;">1h, 7m</div>
<div class="t" style="left:1937.8px;top:944.0px;font-size:18.3px;color:#1c1c1c;letter-spacing:0.01px;-webkit-text-stroke:0.2px #1c1c1c;"><span style="visibility:hidden">1</span>h, 13m, 6s</div>
<div class="t" style="left:2082.4px;top:944.0px;font-size:18.3px;color:#1c1c1c;letter-spacing:0.01px;-webkit-text-stroke:0.2px #1c1c1c;">+6, 6s</div>
<div class="t" style="left:2228.0px;top:944.0px;font-size:18.3px;color:#1c1c1c;letter-spacing:0.01px;-webkit-text-stroke:0.2px #1c1c1c;">23m, 56s</div>
<div class="t" style="left:1827.8px;top:1001.0px;font-size:18.3px;color:#1c1c1c;letter-spacing:0.01px;-webkit-text-stroke:0.2px #1c1c1c;">1h, 7m</div>
<div class="t" style="left:1937.8px;top:1001.0px;font-size:18.3px;color:#1c1c1c;letter-spacing:0.01px;-webkit-text-stroke:0.2px #1c1c1c;"><span style="visibility:hidden">1</span>h, 12m, 56s</div>
<div class="t" style="left:2082.4px;top:1001.0px;font-size:18.3px;color:#1c1c1c;letter-spacing:0.01px;-webkit-text-stroke:0.2px #1c1c1c;">+5m, 56s</div>
<div class="t" style="left:2228.0px;top:1001.0px;font-size:18.3px;color:#1c1c1c;letter-spacing:0.01px;-webkit-text-stroke:0.2px #1c1c1c;">25m, 56s</div>
<div class="t" style="left:1827.8px;top:1058.0px;font-size:18.3px;color:#1c1c1c;letter-spacing:0.01px;-webkit-text-stroke:0.2px #1c1c1c;">1h, 7m</div>
<div class="t" style="left:1937.8px;top:1058.0px;font-size:18.3px;color:#1c1c1c;letter-spacing:0.01px;-webkit-text-stroke:0.2px #1c1c1c;"><span style="visibility:hidden">1</span>h, 6m, 10s</div>
<div class="t" style="left:2082.4px;top:1058.0px;font-size:18.3px;color:#1c1c1c;letter-spacing:0.01px;-webkit-text-stroke:0.2px #1c1c1c;">-50s</div>
<div class="t" style="left:2228.0px;top:1058.0px;font-size:18.3px;color:#1c1c1c;letter-spacing:0.02px;-webkit-text-stroke:0.2px #1c1c1c;">19m</div>
<div class="t" style="left:1827.8px;top:1172.0px;font-size:18.3px;color:#1c1c1c;letter-spacing:0.01px;-webkit-text-stroke:0.2px #1c1c1c;">1h, 7m</div>
<div class="t" style="left:1937.8px;top:1172.0px;font-size:18.3px;color:#1c1c1c;letter-spacing:0.01px;-webkit-text-stroke:0.2px #1c1c1c;"><span style="visibility:hidden">1</span>h, 20m, 51s</div>
<div class="a" style="left:2070.2px;top:1162.0px;width:110.7px;height:40.0px;background:#a8859e;border-radius:6px;"></div>
<div class="t" style="left:2082.4px;top:1172.0px;font-size:18.3px;color:#1c1c1c;letter-spacing:0.01px;-webkit-text-stroke:0.2px #1c1c1c;">+13m, 51s</div>
<div class="t" style="left:2228.0px;top:1172.0px;font-size:18.3px;color:#1c1c1c;letter-spacing:0.01px;-webkit-text-stroke:0.2px #1c1c1c;">24m, 18s</div>
<div class="t" style="left:1827.8px;top:1229.0px;font-size:18.3px;color:#1c1c1c;letter-spacing:0.01px;-webkit-text-stroke:0.2px #1c1c1c;">1h, 7m</div>
<div class="t" style="left:1937.8px;top:1229.0px;font-size:18.3px;color:#1c1c1c;letter-spacing:0.01px;-webkit-text-stroke:0.2px #1c1c1c;"><span style="visibility:hidden">1</span>h, 11m</div>
<div class="t" style="left:2082.4px;top:1229.0px;font-size:18.3px;color:#1c1c1c;letter-spacing:0.02px;-webkit-text-stroke:0.2px #1c1c1c;">+4m</div>
<div class="t" style="left:2228.0px;top:1229.0px;font-size:18.3px;color:#1c1c1c;letter-spacing:0.01px;-webkit-text-stroke:0.2px #1c1c1c;">26m, 6s</div>
<div class="t" style="left:1827.8px;top:1286.0px;font-size:18.3px;color:#1c1c1c;letter-spacing:0.01px;-webkit-text-stroke:0.2px #1c1c1c;">1h, 7m</div>
<div class="t" style="left:1937.8px;top:1286.0px;font-size:18.3px;color:#1c1c1c;letter-spacing:0.01px;-webkit-text-stroke:0.2px #1c1c1c;"><span style="visibility:hidden">1</span>h, 15m, 6s</div>
<div class="a" style="left:2070.2px;top:1276.0px;width:90.3px;height:40.0px;background:#a8859e;border-radius:6px;"></div>
<div class="t" style="left:2082.4px;top:1286.0px;font-size:18.3px;color:#1c1c1c;letter-spacing:0.01px;-webkit-text-stroke:0.2px #1c1c1c;">+8m, 6s</div>
<div class="t" style="left:2228.0px;top:1286.0px;font-size:18.3px;color:#1c1c1c;letter-spacing:0.01px;-webkit-text-stroke:0.2px #1c1c1c;">26m, 38s</div>
<div class="t" style="left:1827.8px;top:1343.0px;font-size:18.3px;color:#1c1c1c;letter-spacing:0.01px;-webkit-text-stroke:0.2px #1c1c1c;">1h, 7m</div>
<div class="t" style="left:1937.8px;top:1343.0px;font-size:18.3px;color:#1c1c1c;letter-spacing:0.01px;-webkit-text-stroke:0.2px #1c1c1c;"><span style="visibility:hidden">1</span>h, 9m, 1s</div>
<div class="t" style="left:2082.4px;top:1343.0px;font-size:18.3px;color:#1c1c1c;letter-spacing:0.01px;-webkit-text-stroke:0.2px #1c1c1c;">+2m, 1s</div>
<div class="t" style="left:2228.0px;top:1343.0px;font-size:18.3px;color:#1c1c1c;letter-spacing:0.01px;-webkit-text-stroke:0.2px #1c1c1c;">21m, 36s</div>
<div class="t" style="left:1827.8px;top:1457.0px;font-size:18.3px;color:#1c1c1c;letter-spacing:0.01px;-webkit-text-stroke:0.2px #1c1c1c;">1h, 7m</div>
<div class="t" style="left:1937.8px;top:1457.0px;font-size:18.3px;color:#1c1c1c;letter-spacing:0.01px;-webkit-text-stroke:0.2px #1c1c1c;">1h, 17m, 6s</div>
<div class="a" style="left:2070.2px;top:1447.0px;width:100.5px;height:40.0px;background:#a8859e;border-radius:6px;"></div>
<div class="t" style="left:2082.4px;top:1457.0px;font-size:18.3px;color:#1c1c1c;letter-spacing:0.01px;-webkit-text-stroke:0.2px #1c1c1c;">+10m, 6s</div>
<div class="t" style="left:2228.0px;top:1457.0px;font-size:18.3px;color:#1c1c1c;letter-spacing:0.01px;-webkit-text-stroke:0.2px #1c1c1c;">27m, 34s</div>
<div class="t" style="left:783.9px;top:1410.0px;font-size:15px;color:#1c1c1c;letter-spacing:0.82px;-webkit-text-stroke:0.48px #1c1c1c;">JULY 2025</div>
<div class="t" style="left:784.7px;top:1457.0px;font-size:18.35px;color:#1c1c1c;letter-spacing:-0.12px;-webkit-text-stroke:0.2px #1c1c1c;">Mon 1 Jul</div>
<div class="t" style="left:919.8px;top:1457.0px;font-size:18.81px;color:#1c1c1c;letter-spacing:-0.12px;-webkit-text-stroke:0.2px #1c1c1c;">06:30</div>
<div class="t" style="left:1046.0px;top:1457.0px;font-size:18.3px;color:#1c1c1c;letter-spacing:0.02px;-webkit-text-stroke:0.2px #1c1c1c;">40s</div>
<div class="t" style="left:1141.8px;top:1457.0px;font-size:18.3px;color:#1c1c1c;letter-spacing:0.02px;-webkit-text-stroke:0.2px #1c1c1c;">53s</div>
<div class="t" style="left:1241.0px;top:1457.0px;font-size:18.3px;color:#1c1c1c;letter-spacing:0.01px;-webkit-text-stroke:0.2px #1c1c1c;">1m, 5s</div>
<div class="a" style="left:1333.4px;top:1447.0px;width:65.6px;height:40.0px;background:#a8859e;border-radius:6px;"></div>
<div class="t" style="left:1345.7px;top:1457.0px;font-size:18.3px;color:#1c1c1c;letter-spacing:0.02px;-webkit-text-stroke:0.2px #1c1c1c;">+12s</div>
<div class="t" style="left:1443.6px;top:1457.0px;font-size:18.3px;color:#1c1c1c;letter-spacing:0.02px;-webkit-text-stroke:0.2px #1c1c1c;">25s</div>
<div class="t" style="left:1529.4px;top:1457.0px;font-size:18.3px;color:#1c1c1c;letter-spacing:0.01px;-webkit-text-stroke:0.2px #1c1c1c;">2m, 16s</div>
<div class="t" style="left:1628.0px;top:1457.0px;font-size:18.3px;color:#1c1c1c;letter-spacing:0.01px;-webkit-text-stroke:0.2px #1c1c1c;">2m, 5s</div>
<div class="t" style="left:1733.6px;top:1457.0px;font-size:18.3px;color:#1c1c1c;letter-spacing:0.01px;-webkit-text-stroke:0.2px #1c1c1c;">-11s</div>
<div class="a" style="left:1791.0px;top:300.0px;width:18.0px;height:1320.0px;background:linear-gradient(to right,rgba(0,0,0,0),rgba(0,0,0,0.07));"></div>
<div class="a" style="left:766.0px;top:1466.3px;width:1610.0px;height:7.0px;background:linear-gradient(to bottom,rgba(0,0,0,0),rgba(0,0,0,0.09));"></div>
<div class="a" style="left:766.0px;top:1473.3px;width:1610.0px;height:147.0px;background:#9e9aa6;"></div>
<div class="a" style="left:766.0px;top:1553.5px;width:1610.0px;height:1.4px;background:#a59cc2;"></div>
<div class="a" style="left:1791.0px;top:1473.3px;width:18.0px;height:147.0px;background:linear-gradient(to right,rgba(0,0,0,0),rgba(0,0,0,0.06));"></div>
<div class="t" style="left:791.0px;top:1502.0px;font-size:20px;color:#1c1c1c;letter-spacing:0.08px;-webkit-text-stroke:0.56px #1c1c1c;">Averages</div>
<svg class="a" style="left:886.0px;top:1502.0px;" width="26" height="23" viewBox="0 0 26 23" fill="none"><path d="M13 2.6L23.6 20.6H2.4Z" stroke="#b5661c" stroke-width="2.1" stroke-linejoin="round"/><path d="M13 9V14.2" stroke="#b5661c" stroke-width="2.1" stroke-linecap="round"/><circle cx="13" cy="17.3" r="1.2" fill="#b5661c"/></svg>
<div class="a" style="left:1024.8px;top:1492.5px;width:1.6px;height:44.1px;background:#9583c8;"></div>
<div class="a" style="left:1119.6px;top:1492.5px;width:1.6px;height:44.1px;background:#9583c8;"></div>
<div class="a" style="left:1508.0px;top:1492.5px;width:1.6px;height:44.1px;background:#9583c8;"></div>
<div class="t" style="left:1039.3px;top:1503.0px;font-size:18.3px;color:#1c1c1c;letter-spacing:0.01px;-webkit-text-stroke:0.2px #1c1c1c;">1m, 4s</div>
<div class="t" style="left:1140.7px;top:1503.0px;font-size:18.3px;color:#1c1c1c;letter-spacing:0.02px;-webkit-text-stroke:0.2px #1c1c1c;">53s</div>
<div class="t" style="left:1240.5px;top:1503.0px;font-size:18.3px;color:#1c1c1c;letter-spacing:0.01px;-webkit-text-stroke:0.2px #1c1c1c;">47m, 3s</div>
<div class="a" style="left:1333.4px;top:1493.3px;width:52.6px;height:40.3px;background:#8c95a9;border-radius:6px;"></div>
<div class="t" style="left:1346.3px;top:1503.0px;font-size:18.3px;color:#1c1c1c;letter-spacing:0.02px;-webkit-text-stroke:0.2px #1c1c1c;">-7s</div>
<div class="t" style="left:1443.3px;top:1503.0px;font-size:18.3px;color:#1c1c1c;letter-spacing:0.02px;-webkit-text-stroke:0.2px #1c1c1c;">32s</div>
<div class="t" style="left:1530.7px;top:1503.0px;font-size:18.3px;color:#1c1c1c;letter-spacing:0.01px;-webkit-text-stroke:0.2px #1c1c1c;">2m, 16s</div>
<div class="t" style="left:1630.8px;top:1503.0px;font-size:18.3px;color:#1c1c1c;letter-spacing:0.01px;-webkit-text-stroke:0.2px #1c1c1c;">1m, 34s</div>
<div class="a" style="left:1723.7px;top:1493.3px;width:62.8px;height:40.3px;background:#8c95a9;border-radius:6px;"></div>
<div class="t" style="left:1735.8px;top:1503.0px;font-size:18.3px;color:#1c1c1c;letter-spacing:0.01px;-webkit-text-stroke:0.2px #1c1c1c;">-29s</div>
<div class="t" style="left:791.0px;top:1576.0px;font-size:20px;color:#1c1c1c;letter-spacing:0.22px;-webkit-text-stroke:0.56px #1c1c1c;">Distribution</div>
<div class="a" style="left:1320.2px;top:1565.0px;width:173.3px;height:43.5px;border:1.5px solid #8f7dbd;box-sizing:border-box;border-radius:8px;"></div>
<svg class="a" style="left:1335.7px;top:1579.3px;" width="17" height="16" viewBox="0 0 17 16" fill="none"><path d="M1.2 14.6V8.4H5.8V1.2H10.6V14.6M10.6 5.2H15.2V14.6M5.8 8.4V14.6" stroke="#2b3f7e" stroke-width="1.7" stroke-linejoin="round" stroke-linecap="round"/></svg>
<div class="t" style="left:1363.5px;top:1579.0px;font-size:15.5px;color:#2b3f7e;letter-spacing:0.75px;-webkit-text-stroke:0.48px #2b3f7e;">View segments</div>
<div class="a" style="left:1710.3px;top:1565.0px;width:173.3px;height:43.5px;border:1.5px solid #8f7dbd;box-sizing:border-box;border-radius:8px;"></div>
<svg class="a" style="left:1725.8px;top:1579.3px;" width="17" height="16" viewBox="0 0 17 16" fill="none"><path d="M1.2 14.6V8.4H5.8V1.2H10.6V14.6M10.6 5.2H15.2V14.6M5.8 8.4V14.6" stroke="#2b3f7e" stroke-width="1.7" stroke-linejoin="round" stroke-linecap="round"/></svg>
<div class="t" style="left:1753.3px;top:1579.0px;font-size:15.5px;color:#2b3f7e;letter-spacing:0.75px;-webkit-text-stroke:0.48px #2b3f7e;">View segments</div>
<div class="a" style="left:1809.0px;top:1473.3px;width:567.0px;height:147.0px;background:#9e9aa6;"></div>
<div class="a" style="left:1809.0px;top:1553.5px;width:567.0px;height:1.4px;background:#a59cc2;"></div>
<div class="t" style="left:1827.8px;top:1503.0px;font-size:18.3px;color:#1c1c1c;letter-spacing:0.01px;-webkit-text-stroke:0.2px #1c1c1c;">1h, 7m</div>
<div class="t" style="left:1938.9px;top:1503.0px;font-size:18.3px;color:#1c1c1c;letter-spacing:0.01px;-webkit-text-stroke:0.2px #1c1c1c;">1h, 18m, 19s</div>
<div class="a" style="left:2071.5px;top:1493.3px;width:89.9px;height:40.3px;background:#a8859e;border-radius:6px;"></div>
<div class="t" style="left:2083.6px;top:1503.0px;font-size:18.3px;color:#1c1c1c;letter-spacing:0.01px;-webkit-text-stroke:0.2px #1c1c1c;">+9m, 4s</div>
<div class="t" style="left:2229.7px;top:1503.0px;font-size:18.3px;color:#1c1c1c;letter-spacing:0.01px;-webkit-text-stroke:0.2px #1c1c1c;">23m, 22s</div>
<div class="a" style="left:2166.3px;top:1565.0px;width:192.7px;height:43.5px;border:1.5px solid #8f7dbd;box-sizing:border-box;border-radius:8px;"></div>
<svg class="a" style="left:2181.8px;top:1579.3px;" width="17" height="16" viewBox="0 0 17 16" fill="none"><path d="M1.2 14.6V8.4H5.8V1.2H10.6V14.6M10.6 5.2H15.2V14.6M5.8 8.4V14.6" stroke="#2b3f7e" stroke-width="1.7" stroke-linejoin="round" stroke-linecap="round"/></svg>
<div class="t" style="left:2208.8px;top:1579.0px;font-size:15.5px;color:#2b3f7e;letter-spacing:0.77px;-webkit-text-stroke:0.48px #2b3f7e;">View total journey</div>
<div class="a" style="left:738.0px;top:273.0px;width:1208.6px;height:1111.2px;background:#ffffff;border:2px solid #8fcceb;box-sizing:border-box;border-radius:10px;box-shadow:0 2px 10px rgba(0,0,0,0.10);"></div>
<div class="a" style="left:1112.8px;top:275.0px;width:1.6px;height:1107.2px;background:#d0d0d0;"></div>
<div class="t" style="left:770.0px;top:309.0px;font-size:22px;color:#0d0d0d;letter-spacing:1.26px;-webkit-text-stroke:0.64px #0d0d0d;">Distribution of total journey</div>
<div class="t" style="left:770.0px;top:339.0px;font-size:22px;color:#0d0d0d;letter-spacing:2.25px;-webkit-text-stroke:0.64px #0d0d0d;">time</div>
<div class="t" style="left:770.0px;top:374.0px;font-size:19px;color:#6c6c6c;letter-spacing:0.68px;-webkit-text-stroke:0.2px #6c6c6c;">Multiple scheduled durations</div>
<div class="a" style="left:770.0px;top:426.2px;width:314.5px;height:1.3px;background:#d8d8d8;"></div>
<div class="t" style="left:770.0px;top:460.0px;font-size:15px;color:#1a1a1a;letter-spacing:0.27px;-webkit-text-stroke:0.48px #1a1a1a;">TOTAL JOURNEY</div>
<svg class="a" style="left:769.0px;top:493.0px;" width="31" height="31" viewBox="0 0 31 31" fill="none"><circle cx="15.4" cy="15.2" r="13.5" stroke="#6f6f6f" stroke-width="1.9"/><circle cx="15.4" cy="15.2" r="9.2" stroke="#6f6f6f" stroke-width="1.9"/><path d="M15.4 10V15.5L19.6 17.5" stroke="#6f6f6f" stroke-width="1.8" stroke-linecap="round" stroke-linejoin="round"/></svg>
<div class="t" style="left:812.0px;top:497.0px;font-size:19.5px;color:#151515;letter-spacing:0.28px;-webkit-text-stroke:0.48px #151515;">Little Northpool</div>
<div class="t" style="left:812.0px;top:530.0px;font-size:15.87px;color:#151515;letter-spacing:-0.12px;-webkit-text-stroke:0.2px #151515;">2967392739701937680</div>
<div class="a" style="left:783.3px;top:522.5px;width:2.8px;height:49.5px;background:#5bb0dd;"></div>
<svg class="a" style="left:770.9px;top:569.5px;" width="28" height="28" viewBox="0 0 28 28" fill="none"><rect x="2.5" y="2.5" width="22.7" height="22.8" rx="3.6" fill="#cdeaf8" stroke="#1d78a6" stroke-width="2.4"/><rect x="6.2" y="6.2" width="16" height="15.6" rx="0.8" stroke="#1d78a6" stroke-width="2"/><path d="M13.7 9.3V14L17.8 16" stroke="#1d78a6" stroke-width="1.9" stroke-linecap="round" stroke-linejoin="round"/></svg>
<div class="t" style="left:812.0px;top:572.0px;font-size:19.47px;color:#151515;letter-spacing:-0.12px;-webkit-text-stroke:0.48px #151515;">Berkley Lane</div>
<div class="t" style="left:812.0px;top:605.0px;font-size:15.87px;color:#151515;letter-spacing:-0.12px;-webkit-text-stroke:0.2px #151515;">2967392739701937689</div>
<div class="a" style="left:770.0px;top:654.1px;width:314.5px;height:1.3px;background:#d8d8d8;"></div>
<div class="t" style="left:770.0px;top:688.0px;font-size:15px;color:#1a1a1a;letter-spacing:0.19px;-webkit-text-stroke:0.48px #1a1a1a;">SCHEDULED DURATION RANGE</div>
<div class="t" style="left:771.0px;top:714.0px;font-size:37px;color:#4aa3d0;letter-spacing:1.78px;-webkit-text-stroke:0.4px #4aa3d0;">40m - 1h, 5m</div>
<div class="t" style="left:770.0px;top:775.0px;font-size:15px;color:#1a1a1a;letter-spacing:0.57px;-webkit-text-stroke:0.48px #1a1a1a;">MEAN ACTUAL DURATION</div>
<div class="t" style="left:771.0px;top:802.0px;font-size:37px;color:#4aa3d0;letter-spacing:0.29px;-webkit-text-stroke:0.4px #4aa3d0;">49m, 13s</div>
<div class="a" style="left:770.0px;top:875.8px;width:314.5px;height:1.3px;background:#d8d8d8;"></div>
<div class="t" style="left:770.0px;top:911.0px;font-size:14.91px;color:#1a1a1a;letter-spacing:-0.12px;-webkit-text-stroke:0.48px #1a1a1a;">COMPLETED %</div>
<div class="t" style="left:771.0px;top:936.0px;font-size:37px;color:#4aa3d0;letter-spacing:0.15px;-webkit-text-stroke:0.4px #4aa3d0;">44.6%</div>
<div class="t" style="left:770.0px;top:998.0px;font-size:19px;color:#151515;letter-spacing:0.10px;-webkit-text-stroke:0.2px #151515;">Scheduled segments:  315</div>
<div class="t" style="left:770.0px;top:1031.0px;font-size:19px;color:#151515;letter-spacing:0.32px;-webkit-text-stroke:0.2px #151515;">Completed segments:  140</div>
<div class="a" style="left:770.0px;top:1082.6px;width:314.5px;height:1.3px;background:#d8d8d8;"></div>
<div class="t" style="left:770.0px;top:1117.0px;font-size:15px;color:#1a1a1a;letter-spacing:0.42px;-webkit-text-stroke:0.48px #1a1a1a;">ACTUAL</div>
<div class="t" style="left:770.0px;top:1154.0px;font-size:19px;color:#151515;letter-spacing:0.17px;-webkit-text-stroke:0.2px #151515;">Mean:</div>
<div class="t" style="left:931.7px;top:1155.0px;font-size:18.27px;color:#151515;letter-spacing:-0.12px;-webkit-text-stroke:0.2px #151515;">49m, 13s</div>
<div class="t" style="left:770.0px;top:1193.0px;font-size:19px;color:#151515;letter-spacing:0.42px;-webkit-text-stroke:0.2px #151515;">Median:</div>
<div class="t" style="left:931.7px;top:1193.0px;font-size:19px;color:#151515;letter-spacing:0.08px;-webkit-text-stroke:0.2px #151515;">49m, 32s</div>
<div class="t" style="left:770.0px;top:1232.0px;font-size:19px;color:#151515;letter-spacing:0.59px;-webkit-text-stroke:0.2px #151515;">90th percentile:</div>
<div class="t" style="left:931.7px;top:1232.0px;font-size:19px;color:#151515;letter-spacing:0.31px;-webkit-text-stroke:0.2px #151515;">56m, 58s</div>
<div class="t" style="left:770.0px;top:1271.0px;font-size:19px;color:#151515;letter-spacing:0.21px;-webkit-text-stroke:0.2px #151515;">10th percentile:</div>
<div class="t" style="left:931.7px;top:1271.0px;font-size:19px;color:#151515;letter-spacing:0.08px;-webkit-text-stroke:0.2px #151515;">39m, 29s</div>
<svg class="a" style="left:1887.0px;top:308.0px;" width="20" height="20" viewBox="0 0 20 20" fill="none"><path d="M3.5 3.5L16.5 16.5M16.5 3.5L3.5 16.5" stroke="#111" stroke-width="2" stroke-linecap="round"/></svg>
<div class="t" style="left:1182.5px;top:313.0px;font-size:19px;color:#0d0d0d;letter-spacing:0.74px;-webkit-text-stroke:0.56px #0d0d0d;">By scheduled duration</div>
<div class="a" style="left:1209.2px;top:365.0px;width:700.4px;height:2.0px;background:#dbdbdb;"></div>
<div class="t" style="left:1176.5px;top:361.0px;font-size:16px;color:#1f1f1f;letter-spacing:0.30px;-webkit-text-stroke:0.2px #1f1f1f;">100</div>
<div class="a" style="left:1209.2px;top:401.0px;width:700.4px;height:2.0px;background:#dbdbdb;"></div>
<div class="t" style="left:1185.7px;top:397.0px;font-size:16px;color:#1f1f1f;letter-spacing:0.30px;-webkit-text-stroke:0.2px #1f1f1f;">90</div>
<div class="a" style="left:1209.2px;top:437.0px;width:700.4px;height:2.0px;background:#dbdbdb;"></div>
<div class="t" style="left:1185.7px;top:433.0px;font-size:16px;color:#1f1f1f;letter-spacing:0.30px;-webkit-text-stroke:0.2px #1f1f1f;">80</div>
<div class="a" style="left:1209.2px;top:473.0px;width:700.4px;height:2.0px;background:#dbdbdb;"></div>
<div class="t" style="left:1185.7px;top:469.0px;font-size:16px;color:#1f1f1f;letter-spacing:0.30px;-webkit-text-stroke:0.2px #1f1f1f;">70</div>
<div class="a" style="left:1209.2px;top:509.0px;width:700.4px;height:2.0px;background:#dbdbdb;"></div>
<div class="t" style="left:1185.7px;top:505.0px;font-size:16px;color:#1f1f1f;letter-spacing:0.30px;-webkit-text-stroke:0.2px #1f1f1f;">60</div>
<div class="a" style="left:1209.2px;top:544.0px;width:700.4px;height:2.0px;background:#dbdbdb;"></div>
<div class="t" style="left:1185.7px;top:541.0px;font-size:16px;color:#1f1f1f;letter-spacing:0.30px;-webkit-text-stroke:0.2px #1f1f1f;">50</div>
<div class="a" style="left:1209.2px;top:580.0px;width:700.4px;height:2.0px;background:#dbdbdb;"></div>
<div class="t" style="left:1185.7px;top:577.0px;font-size:16px;color:#1f1f1f;letter-spacing:0.30px;-webkit-text-stroke:0.2px #1f1f1f;">40</div>
<div class="a" style="left:1209.2px;top:616.0px;width:700.4px;height:2.0px;background:#dbdbdb;"></div>
<div class="t" style="left:1185.7px;top:613.0px;font-size:16px;color:#1f1f1f;letter-spacing:0.30px;-webkit-text-stroke:0.2px #1f1f1f;">30</div>
<div class="a" style="left:1209.2px;top:652.0px;width:700.4px;height:2.0px;background:#dbdbdb;"></div>
<div class="t" style="left:1185.7px;top:648.0px;font-size:16px;color:#1f1f1f;letter-spacing:0.30px;-webkit-text-stroke:0.2px #1f1f1f;">20</div>
<div class="a" style="left:1209.2px;top:688.0px;width:700.4px;height:2.0px;background:#dbdbdb;"></div>
<div class="t" style="left:1185.7px;top:684.0px;font-size:16px;color:#1f1f1f;letter-spacing:0.30px;-webkit-text-stroke:0.2px #1f1f1f;">10</div>
<div class="a" style="left:1209.2px;top:726.0px;width:700.4px;height:2.0px;background:#d6d6d6;"></div>
<div class="t" style="left:1194.9px;top:723.0px;font-size:16px;color:#1f1f1f;-webkit-text-stroke:0.2px #1f1f1f;">0</div>
<div class="t" style="left:1035.1px;top:571.8px;width:233.7px;text-align:center;font-size:12.49px;letter-spacing:-0.10px;color:#1f1f1f;-webkit-text-stroke:0.2px #1f1f1f;transform:rotate(-90deg);transform-origin:50% 50%;text-indent:-0.10px;">NUMBER OF COMPLETED TRIPS</div>
<div class="a" style="left:1220.1px;top:668.9px;width:13.3px;height:59.5px;background:#c8c8c8;border-radius:3px 3px 0 0;"></div>
<div class="a" style="left:1220.1px;top:709.3px;width:13.3px;height:19.1px;background:#4aa0cb;border-radius:3px 3px 0 0;"></div>
<div class="t" style="left:1217.6px;top:735.0px;font-size:16px;color:#1f1f1f;letter-spacing:0.50px;-webkit-text-stroke:0.2px #1f1f1f;">40</div>
<div class="a" style="left:1263.1px;top:635.9px;width:13.3px;height:92.5px;background:#c8c8c8;border-radius:3px 3px 0 0;"></div>
<div class="a" style="left:1263.1px;top:712.2px;width:13.3px;height:16.2px;background:#4aa0cb;border-radius:3px 3px 0 0;"></div>
<div class="t" style="left:1260.6px;top:735.0px;font-size:16px;color:#1f1f1f;letter-spacing:0.50px;-webkit-text-stroke:0.2px #1f1f1f;">42</div>
<div class="a" style="left:1306.2px;top:601.5px;width:13.3px;height:126.9px;background:#c8c8c8;border-radius:3px 3px 0 0;"></div>
<div class="a" style="left:1306.2px;top:644.9px;width:13.3px;height:83.5px;background:#4aa0cb;border-radius:3px 3px 0 0;"></div>
<div class="t" style="left:1303.7px;top:735.0px;font-size:16px;color:#1f1f1f;letter-spacing:0.50px;-webkit-text-stroke:0.2px #1f1f1f;">44</div>
<div class="a" style="left:1349.2px;top:525.2px;width:13.3px;height:203.2px;background:#c8c8c8;border-radius:3px 3px 0 0;"></div>
<div class="a" style="left:1349.2px;top:608.8px;width:13.3px;height:119.6px;background:#4aa0cb;border-radius:3px 3px 0 0;"></div>
<div class="t" style="left:1346.7px;top:735.0px;font-size:16px;color:#1f1f1f;letter-spacing:0.50px;-webkit-text-stroke:0.2px #1f1f1f;">46</div>
<div class="a" style="left:1392.2px;top:579.0px;width:13.3px;height:149.4px;background:#c8c8c8;border-radius:3px 3px 0 0;"></div>
<div class="a" style="left:1392.2px;top:655.2px;width:13.3px;height:73.2px;background:#4aa0cb;border-radius:3px 3px 0 0;"></div>
<div class="t" style="left:1389.7px;top:735.0px;font-size:16px;color:#1f1f1f;letter-spacing:0.50px;-webkit-text-stroke:0.2px #1f1f1f;">48</div>
<div class="a" style="left:1435.2px;top:567.0px;width:13.3px;height:161.4px;background:#c8c8c8;border-radius:3px 3px 0 0;"></div>
<div class="a" style="left:1435.2px;top:644.9px;width:13.3px;height:83.5px;background:#4aa0cb;border-radius:3px 3px 0 0;"></div>
<div class="t" style="left:1432.8px;top:735.0px;font-size:16px;color:#1f1f1f;letter-spacing:0.50px;-webkit-text-stroke:0.2px #1f1f1f;">50</div>
<div class="a" style="left:1478.3px;top:543.0px;width:13.3px;height:185.4px;background:#c8c8c8;border-radius:3px 3px 0 0;"></div>
<div class="a" style="left:1478.3px;top:709.3px;width:13.3px;height:19.1px;background:#4aa0cb;border-radius:3px 3px 0 0;"></div>
<div class="t" style="left:1475.8px;top:735.0px;font-size:16px;color:#1f1f1f;letter-spacing:0.50px;-webkit-text-stroke:0.2px #1f1f1f;">52</div>
<div class="a" style="left:1521.3px;top:366.0px;width:13.3px;height:362.4px;background:#c8c8c8;border-radius:3px 3px 0 0;"></div>
<div class="a" style="left:1521.3px;top:408.0px;width:13.3px;height:320.4px;background:#4aa0cb;border-radius:3px 3px 0 0;"></div>
<div class="t" style="left:1518.8px;top:735.0px;font-size:16px;color:#1f1f1f;letter-spacing:0.50px;-webkit-text-stroke:0.2px #1f1f1f;">53</div>
<div class="a" style="left:1564.3px;top:524.8px;width:13.3px;height:203.6px;background:#c8c8c8;border-radius:3px 3px 0 0;"></div>
<div class="a" style="left:1564.3px;top:608.8px;width:13.3px;height:119.6px;background:#4aa0cb;border-radius:3px 3px 0 0;"></div>
<div class="t" style="left:1561.8px;top:735.0px;font-size:16px;color:#1f1f1f;letter-spacing:0.50px;-webkit-text-stroke:0.2px #1f1f1f;">55</div>
<div class="a" style="left:1607.4px;top:578.8px;width:13.3px;height:149.6px;background:#c8c8c8;border-radius:3px 3px 0 0;"></div>
<div class="a" style="left:1607.4px;top:655.2px;width:13.3px;height:73.2px;background:#4aa0cb;border-radius:3px 3px 0 0;"></div>
<div class="t" style="left:1604.9px;top:735.0px;font-size:16px;color:#1f1f1f;letter-spacing:0.50px;-webkit-text-stroke:0.2px #1f1f1f;">56</div>
<div class="a" style="left:1650.4px;top:668.9px;width:13.3px;height:59.5px;background:#c8c8c8;border-radius:3px 3px 0 0;"></div>
<div class="a" style="left:1650.4px;top:709.3px;width:13.3px;height:19.1px;background:#4aa0cb;border-radius:3px 3px 0 0;"></div>
<div class="t" style="left:1647.9px;top:735.0px;font-size:16px;color:#1f1f1f;letter-spacing:0.50px;-webkit-text-stroke:0.2px #1f1f1f;">57</div>
<div class="a" style="left:1693.4px;top:553.1px;width:13.3px;height:175.3px;background:#c8c8c8;border-radius:3px 3px 0 0;"></div>
<div class="a" style="left:1693.4px;top:667.3px;width:13.3px;height:61.1px;background:#4aa0cb;border-radius:3px 3px 0 0;"></div>
<div class="t" style="left:1690.9px;top:735.0px;font-size:16px;color:#1f1f1f;letter-spacing:0.50px;-webkit-text-stroke:0.2px #1f1f1f;">58</div>
<div class="a" style="left:1736.5px;top:502.0px;width:13.3px;height:226.4px;background:#c8c8c8;border-radius:3px 3px 0 0;"></div>
<div class="a" style="left:1736.5px;top:553.1px;width:13.3px;height:175.3px;background:#4aa0cb;border-radius:3px 3px 0 0;"></div>
<div class="t" style="left:1734.0px;top:735.0px;font-size:16px;color:#1f1f1f;letter-spacing:0.50px;-webkit-text-stroke:0.2px #1f1f1f;">59</div>
<div class="a" style="left:1779.5px;top:640.1px;width:13.3px;height:88.3px;background:#c8c8c8;border-radius:3px 3px 0 0;"></div>
<div class="a" style="left:1779.5px;top:683.8px;width:13.3px;height:44.6px;background:#4aa0cb;border-radius:3px 3px 0 0;"></div>
<div class="t" style="left:1777.0px;top:735.0px;font-size:16px;color:#1f1f1f;letter-spacing:0.50px;-webkit-text-stroke:0.2px #1f1f1f;">60</div>
<div class="a" style="left:1822.5px;top:694.4px;width:13.3px;height:34.0px;background:#c8c8c8;border-radius:3px 3px 0 0;"></div>
<div class="a" style="left:1822.5px;top:704.8px;width:13.3px;height:23.6px;background:#4aa0cb;border-radius:3px 3px 0 0;"></div>
<div class="t" style="left:1820.0px;top:735.0px;font-size:16px;color:#1f1f1f;letter-spacing:0.50px;-webkit-text-stroke:0.2px #1f1f1f;">62</div>
<div class="a" style="left:1865.5px;top:598.2px;width:13.3px;height:130.2px;background:#c8c8c8;border-radius:3px 3px 0 0;"></div>
<div class="a" style="left:1865.5px;top:679.3px;width:13.3px;height:49.1px;background:#4aa0cb;border-radius:3px 3px 0 0;"></div>
<div class="t" style="left:1863.1px;top:735.0px;font-size:16px;color:#1f1f1f;letter-spacing:0.50px;-webkit-text-stroke:0.2px #1f1f1f;">65</div>
<div class="t" style="left:1443.5px;top:775.0px;font-size:12px;color:#1f1f1f;letter-spacing:0.56px;-webkit-text-stroke:0.24px #1f1f1f;">SCHEDULED DURATIONS (MINS)</div>
<div class="t" style="left:1184.3px;top:845.0px;font-size:19px;color:#0d0d0d;letter-spacing:0.79px;-webkit-text-stroke:0.56px #0d0d0d;">By actual duration</div>
<div class="a" style="left:1209.2px;top:898.0px;width:700.4px;height:2.0px;background:#dbdbdb;"></div>
<div class="t" style="left:1176.5px;top:894.0px;font-size:16px;color:#1f1f1f;letter-spacing:0.30px;-webkit-text-stroke:0.2px #1f1f1f;">100</div>
<div class="a" style="left:1209.2px;top:936.0px;width:700.4px;height:2.0px;background:#dbdbdb;"></div>
<div class="t" style="left:1185.7px;top:933.0px;font-size:16px;color:#1f1f1f;letter-spacing:0.30px;-webkit-text-stroke:0.2px #1f1f1f;">90</div>
<div class="a" style="left:1209.2px;top:975.0px;width:700.4px;height:2.0px;background:#dbdbdb;"></div>
<div class="t" style="left:1185.7px;top:972.0px;font-size:16px;color:#1f1f1f;letter-spacing:0.30px;-webkit-text-stroke:0.2px #1f1f1f;">80</div>
<div class="a" style="left:1209.2px;top:1014.0px;width:700.4px;height:2.0px;background:#dbdbdb;"></div>
<div class="t" style="left:1185.7px;top:1011.0px;font-size:16px;color:#1f1f1f;letter-spacing:0.30px;-webkit-text-stroke:0.2px #1f1f1f;">70</div>
<div class="a" style="left:1209.2px;top:1053.0px;width:700.4px;height:2.0px;background:#dbdbdb;"></div>
<div class="t" style="left:1185.7px;top:1049.0px;font-size:16px;color:#1f1f1f;letter-spacing:0.30px;-webkit-text-stroke:0.2px #1f1f1f;">60</div>
<div class="a" style="left:1209.2px;top:1092.0px;width:700.4px;height:2.0px;background:#dbdbdb;"></div>
<div class="t" style="left:1185.7px;top:1088.0px;font-size:16px;color:#1f1f1f;letter-spacing:0.30px;-webkit-text-stroke:0.2px #1f1f1f;">50</div>
<div class="a" style="left:1209.2px;top:1131.0px;width:700.4px;height:2.0px;background:#dbdbdb;"></div>
<div class="t" style="left:1185.7px;top:1127.0px;font-size:16px;color:#1f1f1f;letter-spacing:0.30px;-webkit-text-stroke:0.2px #1f1f1f;">40</div>
<div class="a" style="left:1209.2px;top:1170.0px;width:700.4px;height:2.0px;background:#dbdbdb;"></div>
<div class="t" style="left:1185.7px;top:1166.0px;font-size:16px;color:#1f1f1f;letter-spacing:0.30px;-webkit-text-stroke:0.2px #1f1f1f;">30</div>
<div class="a" style="left:1209.2px;top:1208.0px;width:700.4px;height:2.0px;background:#dbdbdb;"></div>
<div class="t" style="left:1185.7px;top:1205.0px;font-size:16px;color:#1f1f1f;letter-spacing:0.30px;-webkit-text-stroke:0.2px #1f1f1f;">20</div>
<div class="a" style="left:1209.2px;top:1247.0px;width:700.4px;height:2.0px;background:#dbdbdb;"></div>
<div class="t" style="left:1185.7px;top:1244.0px;font-size:16px;color:#1f1f1f;letter-spacing:0.30px;-webkit-text-stroke:0.2px #1f1f1f;">10</div>
<div class="a" style="left:1209.2px;top:1289.0px;width:688.2px;height:2.0px;background:#d6d6d6;"></div>
<div class="t" style="left:1194.9px;top:1285.0px;font-size:16px;color:#1f1f1f;-webkit-text-stroke:0.2px #1f1f1f;">0</div>
<div class="t" style="left:1035.0px;top:1118.6px;width:233.7px;text-align:center;font-size:12.49px;letter-spacing:-0.10px;color:#1f1f1f;-webkit-text-stroke:0.2px #1f1f1f;transform:rotate(-90deg);transform-origin:50% 50%;text-indent:-0.10px;">NUMBER OF COMPLETED TRIPS</div>
<div class="a" style="left:1209.0px;top:1259.9px;width:58.4px;height:29.8px;background:#4aa0cb;border-radius:5.5px 5.5px 0 0;"></div>
<div class="t" style="left:1211.5px;top:1301.0px;font-size:16px;color:#1f1f1f;-webkit-text-stroke:0.2px #1f1f1f;">[31, 35]</div>
<div class="a" style="left:1278.7px;top:1223.8px;width:58.4px;height:65.9px;background:#4aa0cb;border-radius:5.5px 5.5px 0 0;"></div>
<div class="t" style="left:1281.2px;top:1301.0px;font-size:16px;color:#1f1f1f;-webkit-text-stroke:0.2px #1f1f1f;">[35, 40]</div>
<div class="a" style="left:1348.4px;top:1207.4px;width:58.4px;height:82.3px;background:#4aa0cb;border-radius:5.5px 5.5px 0 0;"></div>
<div class="t" style="left:1350.9px;top:1301.0px;font-size:16px;color:#1f1f1f;-webkit-text-stroke:0.2px #1f1f1f;">[40, 45]</div>
<div class="a" style="left:1418.1px;top:1062.1px;width:58.4px;height:227.6px;background:#4aa0cb;border-radius:5.5px 5.5px 0 0;"></div>
<div class="t" style="left:1420.6px;top:1301.0px;font-size:16px;color:#1f1f1f;-webkit-text-stroke:0.2px #1f1f1f;">[45, 49]</div>
<div class="a" style="left:1487.8px;top:1026.0px;width:58.4px;height:263.7px;background:#4aa0cb;border-radius:5.5px 5.5px 0 0;"></div>
<div class="t" style="left:1490.3px;top:1301.0px;font-size:16px;color:#1f1f1f;-webkit-text-stroke:0.2px #1f1f1f;">[49, 54]</div>
<div class="a" style="left:1557.5px;top:1172.8px;width:58.4px;height:116.9px;background:#4aa0cb;border-radius:5.5px 5.5px 0 0;"></div>
<div class="t" style="left:1560.0px;top:1301.0px;font-size:16px;color:#1f1f1f;-webkit-text-stroke:0.2px #1f1f1f;">[54, 58]</div>
<div class="a" style="left:1627.2px;top:1223.8px;width:58.4px;height:65.9px;background:#4aa0cb;border-radius:5.5px 5.5px 0 0;"></div>
<div class="t" style="left:1629.7px;top:1301.0px;font-size:16px;color:#1f1f1f;-webkit-text-stroke:0.2px #1f1f1f;">[58, 63]</div>
<div class="t" style="left:1699.4px;top:1301.0px;font-size:16px;color:#1f1f1f;-webkit-text-stroke:0.2px #1f1f1f;">[63, 68]</div>
<div class="t" style="left:1769.1px;top:1301.0px;font-size:16px;color:#1f1f1f;-webkit-text-stroke:0.2px #1f1f1f;">[68, 72]</div>
<div class="a" style="left:1836.3px;top:1276.0px;width:58.4px;height:13.7px;background:#4aa0cb;border-radius:5.5px 5.5px 0 0;"></div>
<div class="t" style="left:1838.8px;top:1301.0px;font-size:16px;color:#1f1f1f;-webkit-text-stroke:0.2px #1f1f1f;">[72, 77]</div>
<div class="t" style="left:1461.0px;top:1337.0px;font-size:12px;color:#1f1f1f;letter-spacing:0.75px;-webkit-text-stroke:0.24px #1f1f1f;">ACTUAL DURATION (MINS)</div>
</div></div>
<div class="a" style="left:48.0px;top:544.2px;width:715.4px;height:3.6px;background:#e99b36;border-radius:2px;"></div>
<svg class="a" style="left:-1.0px;top:497.0px" width="98" height="98" shape-rendering="crispEdges"><circle cx="49" cy="49" r="48" fill="#e99b36"/></svg>
<div class="t" style="left:34.1px;top:522.0px;font-size:49px;color:#ffffff;font-weight:bold;transform:scaleX(0.93);transform-origin:50% 50%;">2</div>
<div class="a" style="left:48.0px;top:694.5px;width:715.4px;height:3.6px;background:#e99b36;border-radius:2px;"></div>
<svg class="a" style="left:-1.0px;top:647.3px" width="98" height="98" shape-rendering="crispEdges"><circle cx="49" cy="49" r="48" fill="#e99b36"/></svg>
<div class="t" style="left:34.1px;top:673.0px;font-size:49px;color:#ffffff;font-weight:bold;transform:scaleX(0.93);transform-origin:50% 50%;">3</div>
<div class="a" style="left:48.0px;top:781.4px;width:715.4px;height:3.6px;background:#e99b36;border-radius:2px;"></div>
<svg class="a" style="left:-1.0px;top:734.2px" width="98" height="98" shape-rendering="crispEdges"><circle cx="49" cy="49" r="48" fill="#e99b36"/></svg>
<div class="t" style="left:34.1px;top:759.0px;font-size:49px;color:#ffffff;font-weight:bold;transform:scaleX(0.93);transform-origin:50% 50%;">4</div>
<div class="a" style="left:48.0px;top:911.6px;width:715.4px;height:3.6px;background:#e99b36;border-radius:2px;"></div>
<svg class="a" style="left:-1.0px;top:864.4px" width="98" height="98" shape-rendering="crispEdges"><circle cx="49" cy="49" r="48" fill="#e99b36"/></svg>
<div class="t" style="left:34.1px;top:890.0px;font-size:49px;color:#ffffff;font-weight:bold;transform:scaleX(0.93);transform-origin:50% 50%;">5</div>
<div class="a" style="left:48.0px;top:1120.2px;width:715.4px;height:3.6px;background:#e99b36;border-radius:2px;"></div>
<svg class="a" style="left:-1.0px;top:1073.0px" width="98" height="98" shape-rendering="crispEdges"><circle cx="49" cy="49" r="48" fill="#e99b36"/></svg>
<div class="t" style="left:34.1px;top:1098.0px;font-size:49px;color:#ffffff;font-weight:bold;transform:scaleX(0.93);transform-origin:50% 50%;">6</div>
<div class="a" style="left:2367.0px;top:1584.7px;width:177.0px;height:3.6px;background:#e99b36;border-radius:2px;"></div>
<svg class="a" style="left:2495.0px;top:1537.5px" width="97" height="98" shape-rendering="crispEdges"><circle cx="49" cy="49" r="48" fill="#e99b36"/></svg>
<div class="t" style="left:2530.1px;top:1563.0px;font-size:49px;color:#ffffff;font-weight:bold;transform:scaleX(0.93);transform-origin:50% 50%;">1</div>
</body></html>
